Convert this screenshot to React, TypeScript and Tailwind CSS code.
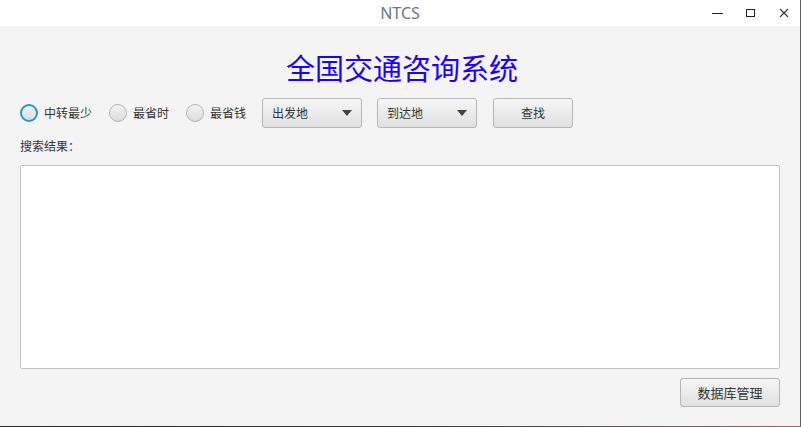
import React from "react";

const font = { fontFamily: '"Noto Sans CJK SC", "Noto Sans", sans-serif' };

function Radio({ label, selected }: { label: string; selected?: boolean }) {
  return (
    <div className="flex items-center gap-[6px]">
      <div
        className={
          "w-[18px] h-[18px] rounded-full bg-gradient-to-b from-[#f4f4f4] to-[#dcdcdc] " +
          (selected ? "border-2 border-[#1f9ad6]" : "border border-[#b5b5b5]")
        }
      />
      <span className="text-[12px] text-[#333]">{label}</span>
    </div>
  );
}

function Combo({ label }: { label: string }) {
  return (
    <div className="w-[100px] h-[30px] rounded-[3px] border border-[#b6b6b6] bg-gradient-to-b from-[#f6f6f6] to-[#e0e0e0] flex items-center justify-between pl-[9px] pr-[9px]">
      <span className="text-[12px] text-[#333]">{label}</span>
      <svg width="10" height="6" viewBox="0 0 10 6">
        <path d="M0 0 L10 0 L5 6 Z" fill="#444" />
      </svg>
    </div>
  );
}

export default function App() {
  return (
    <div className="w-[801px] h-[427px] flex flex-col bg-[#f4f4f4] overflow-hidden" style={font}>
      <div className="flex flex-1 min-h-0">
        <div className="flex-1 flex flex-col min-w-0">
          {/* title bar */}
          <div className="h-[26px] bg-white flex items-center relative">
            <div className="flex-1 text-center text-[16px] text-[#6c7587] leading-none" style={{ fontFamily: '"Noto Sans", sans-serif' }}>
              NTCS
            </div>
            <div className="absolute right-0 top-0 h-[26px] flex items-center">
              <div className="w-[33px] flex justify-center">
                <div className="w-[11px] h-[1px] bg-[#222]" />
              </div>
              <div className="w-[33px] flex justify-center">
                <div className="w-[9px] h-[8px] border border-[#222]" />
              </div>
              <div className="w-[33px] flex justify-center">
                <svg width="10" height="10" viewBox="0 0 10 10">
                  <path d="M1 1 L9 9 M9 1 L1 9" stroke="#333" strokeWidth="1.1" />
                </svg>
              </div>
            </div>
          </div>
          {/* content */}
          <div className="flex-1 flex flex-col px-[20px]">
            <div className="h-[72px] flex items-center justify-center pt-[10px]">
              <span className="text-[29px] text-[#1a00ff] leading-none ml-[4px]">全国交通咨询系统</span>
            </div>
            <div className="flex items-center h-[30px]">
              <div className="flex items-center gap-[17px]">
                <Radio label="中转最少" selected />
                <Radio label="最省时" />
                <Radio label="最省钱" />
              </div>
              <div className="ml-[16px] flex items-center gap-[15px]">
                <Combo label="出发地" />
                <Combo label="到达地" />
                <div className="ml-[1px] w-[80px] h-[30px] rounded-[3px] border border-[#b6b6b6] bg-gradient-to-b from-[#f6f6f6] to-[#e0e0e0] flex items-center justify-center">
                  <span className="text-[12px] text-[#333]">查找</span>
                </div>
              </div>
            </div>
            <div className="mt-[11px] text-[12px] text-[#333] leading-none h-[14px] flex items-center">搜索结果：</div>
            <div className="mt-[12px] h-[204px] bg-white border border-[#c2c2c2] rounded-[2px]" />
            <div className="flex justify-end mt-[9px]">
              <div className="w-[100px] h-[29px] rounded-[3px] border border-[#b6b6b6] bg-gradient-to-b from-[#f6f6f6] to-[#e0e0e0] flex items-center justify-center">
                <span className="text-[13px] text-[#333]">数据库管理</span>
              </div>
            </div>
          </div>
        </div>
        <div className="w-[1px] bg-[#6e5a4e]" />
      </div>
      <div className="h-[1px] bg-gradient-to-r from-[#1e2a30] via-[#3a3a40] to-[#a0684a]" />
    </div>
  );
}
